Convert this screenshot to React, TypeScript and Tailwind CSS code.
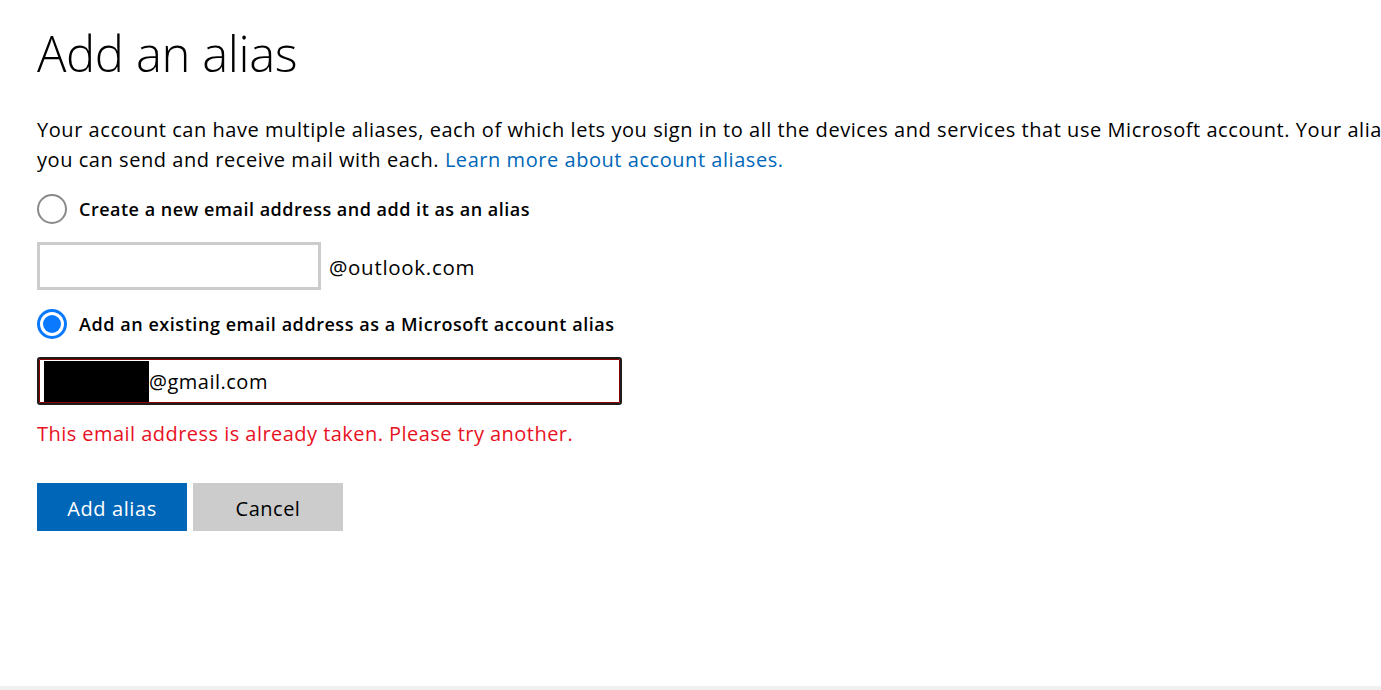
import React from 'react'

const font = { fontFamily: '"Open Sans", "Noto Sans", sans-serif' }

const Radio = ({ checked }: { checked?: boolean }) =>
  checked ? (
    <span className="w-[30px] h-[30px] rounded-full border-[3px] border-[#0a79ff] flex items-center justify-center shrink-0">
      <span className="w-[18px] h-[18px] rounded-full bg-[#0a79ff]" />
    </span>
  ) : (
    <span className="w-[30px] h-[30px] rounded-full border-2 border-[#8a8a8a] shrink-0" />
  )

export default function App() {
  return (
    <div className="w-[1381px] h-[690px] overflow-hidden bg-white flex flex-col text-black" style={font}>
      <div className="flex-1 pl-[37px] pt-[22px] flex flex-col">
        <h1 className="text-[49px] font-light leading-[62px] tracking-[-0.4px]">Add an alias</h1>

        <p className="mt-[31px] text-[20px] leading-[30px] tracking-[0.55px] whitespace-nowrap">
          Your account can have multiple aliases, each of which lets you sign in to all the devices and services that use Microsoft account. Your aliases share the same contacts, online storage, and account settings, and
          <br />
          you can send and receive mail with each.{' '}
          <a className="text-[#0067b8]" href="#">Learn more about account aliases.</a>
        </p>

        <label className="mt-[19px] flex items-center gap-[12px] h-[30px]">
          <Radio />
          <span className="text-[18px] font-semibold tracking-[0.5px]">Create a new email address and add it as an alias</span>
        </label>

        <div className="mt-[18px] flex items-center gap-[8px]">
          <div className="w-[284px] h-[48px] border-[3px] border-[#cccccc] bg-white" />
          <span className="text-[20.5px] tracking-[0.7px] pt-[2px]">@outlook.com</span>
        </div>

        <label className="mt-[19px] flex items-center gap-[12px] h-[30px]">
          <Radio checked />
          <span className="text-[18px] font-semibold tracking-[0.55px]">Add an existing email address as a Microsoft account alias</span>
        </label>

        <div className="mt-[18px] w-[585px] h-[48px] border-2 border-[#1c1c1c] rounded-[3px] shadow-[inset_0_0_0_1px_#8b0000] flex items-center pl-[5px]">
          <span className="w-[105px] h-[41px] bg-black" />
          <span className="text-[20px] tracking-[0.5px] pt-[2px]">@gmail.com</span>
        </div>

        <p className="mt-[14px] text-[20px] leading-[30px] tracking-[0.46px] text-[#e81123]">
          This email address is already taken. Please try another.
        </p>

        <div className="mt-[34px] flex gap-[6px]">
          <button className="w-[150px] h-[48px] pt-[3px] bg-[#0067b8] text-white text-[20px] tracking-[0.6px]">Add alias</button>
          <button className="w-[150px] h-[48px] pt-[3px] bg-[#cccccc] text-black text-[20px] tracking-[0.5px]">Cancel</button>
        </div>
      </div>
      <div className="h-[4px] bg-[#f0f0f0]" />
    </div>
  )
}
